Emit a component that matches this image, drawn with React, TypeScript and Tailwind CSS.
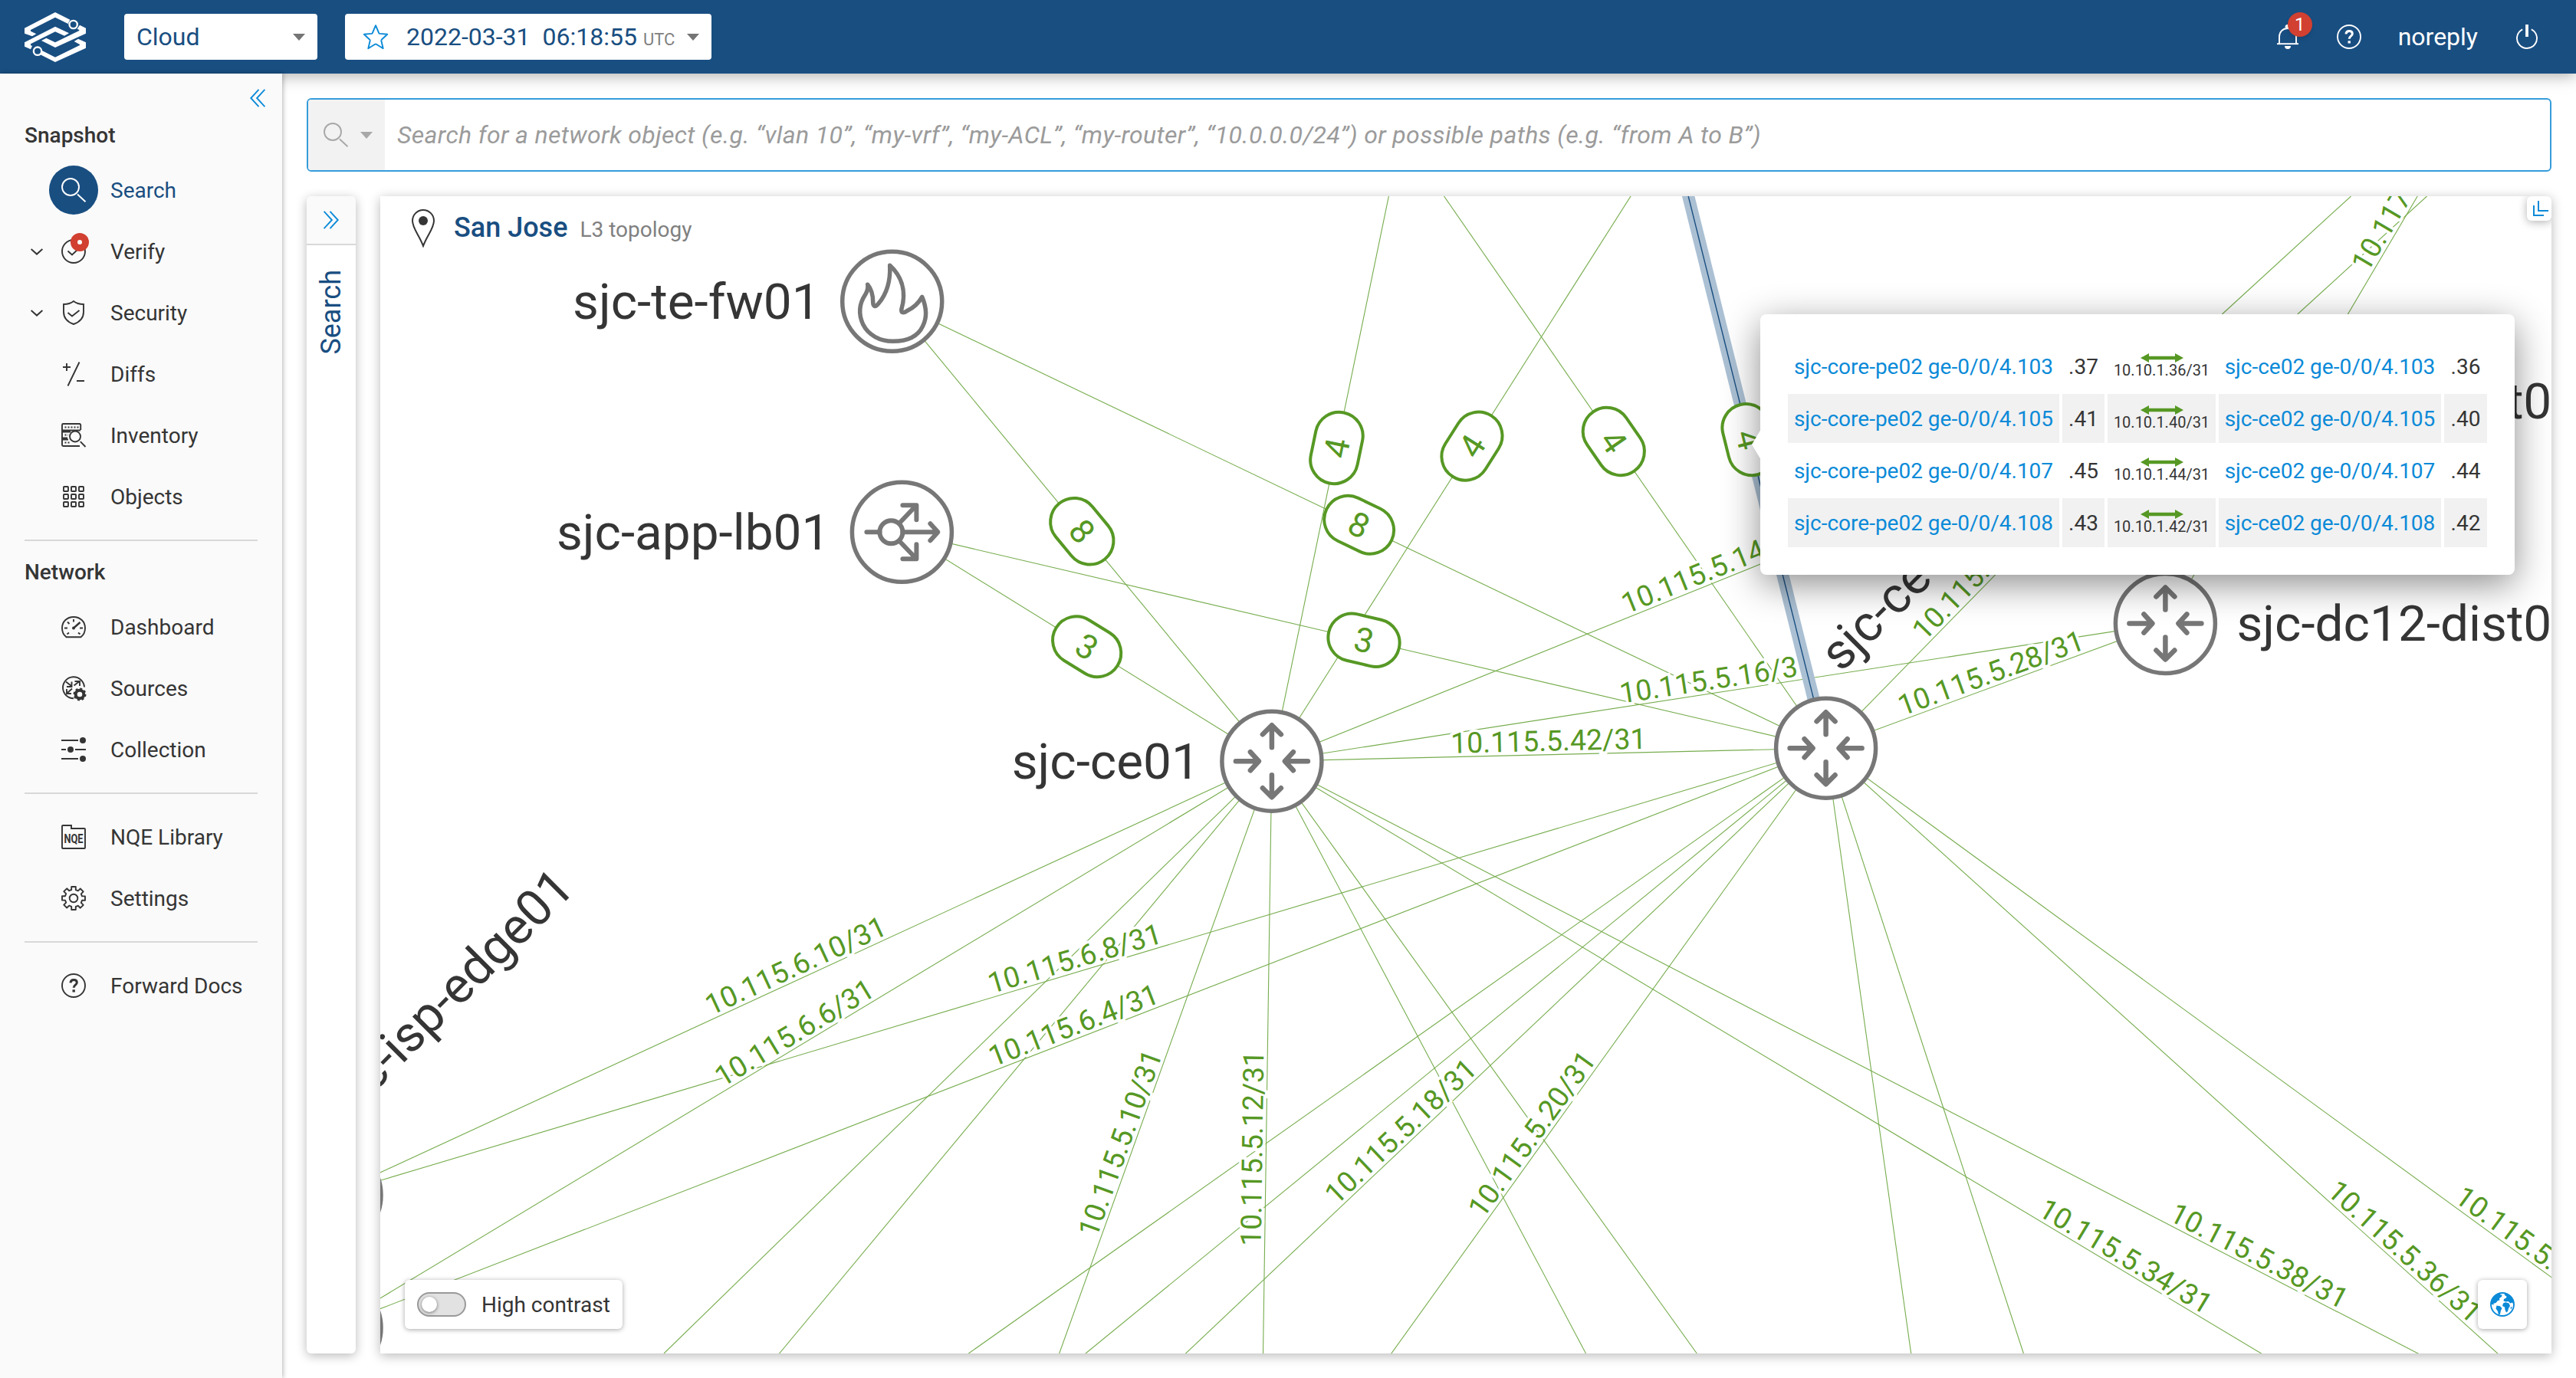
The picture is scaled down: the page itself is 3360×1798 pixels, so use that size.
import type { ReactNode } from "react";

type Point = [number, number];

interface Link {
  from: Point;
  to: Point;
  label?: string;
  count?: number;
}

interface DeviceNode {
  at: Point;
  kind: "router" | "firewall" | "balancer";
  name?: string;
}

const CE01: Point = [1658.9, 993.2];
const CE02: Point = [2381.6, 976.2];
const FW01: Point = [1163.7, 393.3];
const LB01: Point = [1176.4, 694.3];
const DIST11: Point = [2824.4, 523];
const DIST12: Point = [2824.4, 813.5];
const EDGE01: Point = [432, 1559.4];
const EDGE02: Point = [432, 1732.5];
const PE01: Point = [1828, 175.7];
const PE02: Point = [2181, 171];

const LINKS: Link[] = [
  { from: FW01, to: CE01, count: 8 },
  { from: FW01, to: CE02, count: 8 },
  { from: LB01, to: CE01, count: 3 },
  { from: LB01, to: CE02, count: 3 },
  { from: PE01, to: CE01, count: 4 },
  { from: PE02, to: CE01, count: 4 },
  { from: PE01, to: CE02, count: 4 },
  { from: CE01, to: CE02, label: "10.115.5.42/31" },
  { from: CE01, to: DIST11, label: "10.115.5.14/31" },
  { from: CE01, to: DIST12, label: "10.115.5.16/31" },
  { from: CE02, to: DIST11, label: "10.115.5.26/31" },
  { from: CE02, to: DIST12, label: "10.115.5.28/31" },
  { from: CE01, to: EDGE01, label: "10.115.6.10/31" },
  { from: CE01, to: EDGE02, label: "10.115.6.6/31" },
  { from: CE02, to: EDGE01, label: "10.115.6.8/31" },
  { from: CE02, to: EDGE02, label: "10.115.6.4/31" },
  { from: CE01, to: [1297, 2002], label: "10.115.5.10/31" },
  { from: CE01, to: [1644, 2004], label: "10.115.5.12/31" },
  { from: CE02, to: [1297, 2002], label: "10.115.5.18/31" },
  { from: CE02, to: [1644, 2004], label: "10.115.5.20/31" },
  { from: CE01, to: [3868, 2316], label: "10.115.5.34/31" },
  { from: CE01, to: [4218, 2316], label: "10.115.5.38/31" },
  { from: CE02, to: [3868, 2316], label: "10.115.5.36/31" },
  { from: CE02, to: [4218, 2316], label: "10.115.5.40/31" },
  { from: DIST12, to: [3490, -315], label: "10.117.5.10/31" },
  { from: CE01, to: [866, 1766] },
  { from: CE01, to: [1016.5, 1766] },
  { from: CE01, to: [2068.5, 1766] },
  { from: CE01, to: [2213.3, 1766] },
  { from: CE02, to: [2492.7, 1766] },
  { from: CE02, to: [2639.4, 1766] },
  { from: CE02, to: [1416, 1766] },
  { from: CE02, to: [1263.3, 1766] },
  { from: [3066.5, 256], to: [2898.4, 410] },
  { from: [3165.5, 256], to: [2996.8, 410] },
];

const NODES: DeviceNode[] = [
  { at: FW01, kind: "firewall", name: "sjc-te-fw01" },
  { at: LB01, kind: "balancer", name: "sjc-app-lb01" },
  { at: CE01, kind: "router", name: "sjc-ce01" },
  { at: CE02, kind: "router" },
  { at: DIST12, kind: "router" },
  { at: EDGE01, kind: "router" },
  { at: EDGE02, kind: "router" },
];

const SUBNETS = [
  { port: "103", left: ".37", subnet: "10.10.1.36/31", right: ".36" },
  { port: "105", left: ".41", subnet: "10.10.1.40/31", right: ".40" },
  { port: "107", left: ".45", subnet: "10.10.1.44/31", right: ".44" },
  { port: "108", left: ".43", subnet: "10.10.1.42/31", right: ".42" },
];

function midpoint(a: Point, b: Point): Point {
  return [(a[0] + b[0]) / 2, (a[1] + b[1]) / 2];
}

// keeps labels readable: the angle is folded into -90..90
function angle(a: Point, b: Point): number {
  const deg = (Math.atan2(b[1] - a[1], b[0] - a[0]) * 180) / Math.PI;
  if (deg > 90) return deg - 180;
  if (deg <= -90) return deg + 180;
  return deg;
}

function place(link: Link): string {
  const [x, y] = midpoint(link.from, link.to);
  return `translate(${x} ${y}) rotate(${angle(link.from, link.to)})`;
}

function Icon({ children, className = "size-8" }: { children: ReactNode; className?: string }) {
  return (
    <svg
      viewBox="0 0 32 32"
      fill="none"
      stroke="currentColor"
      strokeWidth={1.9}
      className={`${className} overflow-visible shrink-0`}
    >
      {children}
    </svg>
  );
}

const SearchGlyph = (
  <>
    <circle cx="12" cy="12" r="11" />
    <path d="M21 21.5 31.5 31.2" />
  </>
);

const HelpGlyph = (
  <>
    <circle cx="16" cy="16" r="15" />
    <path d="M11.9 12.4c.3-2.6 1.9-3.9 4.3-3.9 2.5 0 4.1 1.4 4.1 3.5 0 3.2-4.1 3.1-4.1 6.8" strokeWidth={3} />
    <path d="M14.5 21.3h3.4v3.2h-3.4z" fill="currentColor" stroke="none" />
  </>
);

function Caret({ className }: { className: string }) {
  return (
    <svg viewBox="0 0 16 9" className={`w-4 h-[9px] shrink-0 ${className}`} fill="currentColor">
      <path d="M0 0h16L8 9z" />
    </svg>
  );
}

function DoubleChevron({ flip = false }: { flip?: boolean }) {
  return (
    <svg
      viewBox="0 0 20 24"
      fill="none"
      stroke="currentColor"
      strokeWidth={1.9}
      className={`w-5 h-6 text-[#0b8ad8] ${flip ? "-scale-x-100" : ""}`}
    >
      <path d="M11.5 .8 1.2 12l10.3 11.2M19.4 .8 9.1 12l10.3 11.2" />
    </svg>
  );
}

function Logo() {
  return (
    <svg viewBox="36 30 240 195" className="w-20 h-[65px]" fill="#fff">
      <path d="M36 92 156 30l58 29-8 16-50-25-96 49v5l22 11-16 9-30-11z" />
      <path d="M252 80l24 12v21l-120 55-54-27 19-10 35 17 94-46v-3l-8-4z" />
      <path d="M36 148 156 86l54 26-18 10-36-16-96 48v5l6 3-6 13-24-11z" />
      <path d="M246 134l30 14v22l-120 55-58-29 8-15 50 25 96-47v-3l-22-12z" />
      <g fill="none" stroke="#fff" strokeWidth={7}>
        <circle cx="227" cy="78" r="15.5" />
        <circle cx="87" cy="182" r="15.5" />
      </g>
    </svg>
  );
}

function Header() {
  return (
    <header className="h-24 shrink-0 flex items-center bg-[#194e81] text-white pl-8 pr-12 shadow-[0_2px_20px_rgba(0,0,0,0.35)]">
      <Logo />
      <button className="ml-[50px] h-[60px] w-[252px] flex items-center justify-between rounded bg-white pl-4 pr-4 text-[32px] text-[#194e81]">
        Cloud
        <Caret className="text-[#757575]" />
      </button>
      <button className="ml-9 h-[60px] w-[478px] flex items-center rounded bg-white pl-6 pr-4 text-[32px] text-[#194e81]">
        <Icon className="size-8 text-[#0b8ad8]">
          <path
            strokeLinejoin="round"
            d="M16 1.2l4.2 9.9c.2.5.5.7 1 .8l10 .9-7.5 7c-.4.4-.5.7-.4 1.200l2.400 10.200-8.800-5.400c-.6-.3-1.200-.3-1.800 0l-8.800 5.400L8.700 21c.1-.5 0-.8-.4-1.200L.8 12.800l10-.9c.5-.1.800-.3 1-.8z"
          />
        </Icon>
        <span className="ml-6">2022-03-31</span>
        <span className="ml-4">06:18:55</span>
        <span className="ml-2 mt-1.5 text-[22px] text-[#808080]">UTC</span>
        <Caret className="ml-auto text-[#757575]" />
      </button>

      <div className="ml-auto flex items-center">
        <div className="relative">
          <Icon>
            <path d="M5 25V16C5 9.500 9.500 5 16 5s11 4.500 11 11v9" />
            <path d="M2 25.200h28" />
            <path d="M16 0a3 3 0 0 1 3 4.500h-6A3 3 0 0 1 16 0zM12 28h8a4 4 0 0 1-8 0z" fill="currentColor" stroke="none" />
          </Icon>
          <span className="absolute left-4 -top-4 size-8 rounded-full bg-[#d14031] text-center text-2xl leading-8 shadow-md">
            1
          </span>
        </div>
        <Icon className="size-8 ml-12">{HelpGlyph}</Icon>
        <span className="ml-12 text-[32px]">noreply</span>
        <Icon className="size-8 ml-12">
          <path d="M10.200 6.300a13 13 0 1 0 11.600 0" />
          <path d="M16 0v16" strokeWidth={3.800} />
        </Icon>
      </div>
    </header>
  );
}

interface NavItemProps {
  label: string;
  icon: ReactNode;
  active?: boolean;
  expandable?: boolean;
  alert?: boolean;
}

function NavItem({ label, icon, active, expandable, alert }: NavItemProps) {
  return (
    <a className={`flex h-20 items-center pl-10 ${active ? "text-[#194e81]" : "text-[#353535]"}`}>
      <span className="w-4">
        {expandable && (
          <svg viewBox="0 0 16 9" className="w-4 h-[9px]" fill="none" stroke="currentColor" strokeWidth={2}>
            <path d="M.6 1 8 7.600 15.400 1" />
          </svg>
        )}
      </span>
      <span
        className={`relative ml-2 size-16 flex items-center justify-center rounded-full ${
          active ? "bg-[#194e81] text-white" : ""
        }`}
      >
        <Icon>{icon}</Icon>
        {alert && (
          <span className="absolute left-7 top-2 size-6 flex items-center justify-center rounded-full bg-[#d14031]">
            <span className="size-1.5 rounded-full bg-white" />
          </span>
        )}
      </span>
      <span className="ml-4 pt-0.5 text-[28px]">{label}</span>
    </a>
  );
}

const GEAR =
  "M13.200 1h5.600v4.200l3 1.200 3-2.900 3.900 3.900-2.900 3 1.200 3H31v5.400h-4l-1.200 3 2.900 3-3.900 3.900-3-2.900-3 1.200V31h-5.600v-4.200l-3-1.200-3 2.900-3.900-3.900 2.900-3-1.200-3H1v-5.400h4l1.200-3-2.900-3 3.900-3.900 3 2.900 3-1.200z";

function Sidebar() {
  return (
    <nav className="relative w-[368px] shrink-0 bg-[#fafafa] pt-4 shadow-[1px_0_6px_rgba(0,0,0,0.3)]">
      <div className="flex h-8 items-center justify-end pr-[22px]">
        <DoubleChevron />
      </div>
      <h2 className="flex h-16 items-center pl-8 pt-0.5 text-[28px] font-medium text-[#353535]">Snapshot</h2>
      <NavItem label="Search" active icon={SearchGlyph} />
      <NavItem
        label="Verify"
        expandable
        alert
        icon={
          <>
            <circle cx="16" cy="16" r="15" />
            <path d="M8.500 15.500l5.500 5 9.500-9" />
          </>
        }
      />
      <NavItem
        label="Security"
        expandable
        icon={
          <>
            <path d="M16 1c3.500 2.800 8 4 13 4v10c0 8-4.500 13-13 16C7.500 28 3 23 3 15V5c5 0 9.500-1.200 13-4z" />
            <path d="M8.500 16l5.500 4.500 9.500-7.500" />
          </>
        }
      />
      <NavItem label="Diffs" icon={<path d="M2 7h10M7 2v10M23.500 .5 8.500 31.500M20 25h10" />} />
      <NavItem
        label="Inventory"
        icon={
          <>
            <path d="M25.200 9V2.500A1.500 1.500 0 0 0 23.700 1H2.500A1.500 1.500 0 0 0 1 2.500V28.500A1.500 1.500 0 0 0 2.500 30H24M1 9.500h24M1 11.500h11M1 19.500h7M1 21.500h8" />
            <path d="M4.500 5.500h18" strokeWidth={2.200} strokeDasharray="2 2" />
            <path d="M4.500 15.500h4.500M4.500 25.500h8" strokeWidth={2.200} strokeDasharray="2 2" />
            <circle cx="18" cy="17.500" r="7" />
            <path d="M24.800 24.200 31.500 31" />
          </>
        }
      />
      <NavItem
        label="Objects"
        icon={[2, 12, 22].map((x) =>
          [2, 12, 22].map((y) => <rect key={`${x}-${y}`} x={x + 1} y={y + 1} width="6" height="6" rx="0.8" />)
        )}
      />

      <hr className="mx-8 mt-4 border-t-2 border-[#d8d8d8]" />
      <h2 className="flex h-[72px] items-center pl-8 pt-2.5 text-[28px] font-medium text-[#353535]">Network</h2>
      <NavItem
        label="Dashboard"
        icon={
          <>
            <path d="M6.500 29.300C3 26.500 1 22 1 17.500 1 9 7.500 3 16 3s15 6 15 14.500c0 4.500-2 9-5.500 11.800z" />
            <path d="M16 6v3.500M4 17.500h4M24 17.500h4M8 9.500l2.500 2.500M7.500 25.500l2.500-2M24.500 25.500l-2.500-2" />
            <path d="M16 17.500 24.500 10" strokeWidth={2.400} />
            <circle cx="16" cy="17.500" r="2" fill="currentColor" stroke="none" />
          </>
        }
      />
      <NavItem
        label="Sources"
        icon={
          <>
            <path d="M16 29.300A14 14 0 1 1 30 14.500" />
            <path d="M6 7.500l7 5.500M13.500 7.500V14H7M16.500 12.500l7-5.500M17.500 7H24v6M14 16.500l-6.500 6M7 17v6h6" />
            <circle cx="24" cy="24" r="5.300" strokeWidth={4} />
            <circle cx="24" cy="24" r="7.200" strokeWidth={2.600} strokeDasharray="2.900 2.750" />
          </>
        }
      />
      <NavItem
        label="Collection"
        icon={
          <>
            <path d="M0 4h22M0 16h6M18 16h14M0 28h22" />
            <g fill="currentColor" stroke="none">
              <circle cx="28" cy="4" r="4" />
              <circle cx="12" cy="16" r="4" />
              <circle cx="28" cy="28" r="4" />
            </g>
          </>
        }
      />

      <hr className="mx-8 my-4 border-t-2 border-[#d8d8d8]" />
      <NavItem
        label="NQE Library"
        icon={
          <>
            <path d="M1 2a1 1 0 0 1 1-1h11v4h17a1 1 0 0 1 1 1v24a1 1 0 0 1-1 1H2a1 1 0 0 1-1-1z" />
            <text
              x="16"
              y="24"
              textAnchor="middle"
              textLength="25"
              lengthAdjust="spacingAndGlyphs"
              fill="currentColor"
              stroke="none"
              className="text-[17px] font-bold"
            >
              NQE
            </text>
          </>
        }
      />
      <NavItem
        label="Settings"
        icon={
          <>
            <path d={GEAR} strokeLinejoin="round" />
            <circle cx="16" cy="16" r="5.300" />
          </>
        }
      />
      <hr className="mx-8 my-4 border-t-2 border-[#d8d8d8]" />
      <NavItem label="Forward Docs" icon={HelpGlyph} />
    </nav>
  );
}

function NodeGlyph({ kind }: { kind: DeviceNode["kind"] }) {
  if (kind === "firewall") {
    return (
      <path
        d="M-3-47C10-35 20-16 12 11c0 5 4 4 8 1 8-4 14-9 19-18 6 14 7 26 1 38-7 15-22 20-39 20s-32-8-39-22c-6-13-5-27 3-39 3-5 4-8 3-13 5 6 7 13 7 23 0 6 3 7 7 2C-7-10-2-26-3-47z"
        strokeWidth={5.500}
        strokeLinejoin="round"
      />
    );
  }
  if (kind === "balancer") {
    return (
      <g strokeWidth={6} strokeLinecap="round" strokeLinejoin="round">
        <circle cx="-14" cy="0" r="15" />
        <path d="M-46 0h17M1 0h45M37-11 47 0 37 11M-3-12l21-22M1-35h18v19M-3 12l21 22M1 35h18v-19" />
      </g>
    );
  }
  return (
    <g strokeWidth={6.500} strokeLinecap="round" strokeLinejoin="round">
      <path d="M0-18v-28M-12-35 0-47l12 12" />
      <path d="M0 18v28M-12 35 0 47l12-12" />
      <path d="M-47 0h29M-28-12-17 0l-11 12" />
      <path d="M47 0h-29M28-12 17 0l11 12" />
    </g>
  );
}

function Topology() {
  return (
    // viewBox is in page pixels, so node positions are window coordinates
    <svg viewBox="496 256 2832 1510" className="block w-full h-full">
      <g stroke="#569922" strokeWidth={1.100} opacity={0.8}>
        {LINKS.map(({ from, to }, i) => (
          <line key={i} x1={from[0]} y1={from[1]} x2={to[0]} y2={to[1]} />
        ))}
      </g>

      <g fill="#569824" stroke="#fff" strokeWidth={7} paintOrder="stroke" textAnchor="middle" className="text-[37.4px]">
        {LINKS.filter((l) => l.label).map((l) => (
          <text key={l.label} transform={place(l)} y={-5}>
            {l.label}
          </text>
        ))}
      </g>

      <line x1={PE02[0]} y1={PE02[1]} x2={CE02[0]} y2={CE02[1]} stroke="#abc0d3" strokeWidth={16} />
      <line x1={PE02[0]} y1={PE02[1]} x2={CE02[0]} y2={CE02[1]} stroke="#194e81" strokeWidth={1.400} />

      {[...LINKS.filter((l) => l.count), { from: PE02, to: CE02, count: 4 }].map((l, i) => (
        <g key={i} transform={place(l)}>
          <rect x={-47} y={-31} width={94} height={62} rx={31} fill="#fff" stroke="#569824" strokeWidth={4} />
          <text y={15.500} textAnchor="middle" fill="#569824" className="text-[44px]">
            {l.count}
          </text>
        </g>
      ))}

      {NODES.map(({ at, kind, name }) => (
        <g key={at.join()} transform={`translate(${at[0]} ${at[1]})`}>
          <circle r={65} fill="#fff" stroke="#777" strokeWidth={5.500} />
          <g fill="none" stroke="#777">
            <NodeGlyph kind={kind} />
          </g>
          {name && (
            <text x={-94} y={22.700} textAnchor="end" fill="#353535" className="text-[65.7px]">
              {name}
            </text>
          )}
        </g>
      ))}

      <g fill="#353535" stroke="#fff" strokeWidth={6} paintOrder="stroke" className="text-[65.7px]">
        <text transform={`translate(${CE02[0]} ${CE02[1]}) rotate(-45)`} x={83} y={-55}>
          sjc-ce02
        </text>
        <text transform={`translate(${EDGE01[0]} ${EDGE01[1]}) rotate(-45)`} x={83} y={-55}>
          sjc-isp-edge01
        </text>
        <text x={DIST12[0] + 93} y={DIST12[1] + 22.500}>
          sjc-dc12-dist0
        </text>
        <text x={DIST11[0] + 93} y={DIST11[1] + 22.500}>
          sjc-dc11-dist0
        </text>
      </g>
    </svg>
  );
}

function LinkPopover() {
  return (
    <div className="absolute left-[1800px] top-[154px] w-[984px] h-[340px] rounded-lg bg-white p-8 shadow-[0_12px_48px_rgba(0,0,0,0.45)]">
      <svg viewBox="0 0 12 40" className="absolute -left-[11px] top-[150px] w-3 h-10" fill="#fff">
        <path d="M12 0v40L0 20z" />
      </svg>
      <table className="w-full table-fixed border-separate border-spacing-1 text-[28px] leading-8 text-[#353535]">
        <colgroup>
          <col className="w-[354px]" />
          <col className="w-[55px]" />
          <col className="w-[141px]" />
          <col className="w-[290px]" />
          <col className="w-[56px]" />
        </colgroup>
        <tbody>
          {SUBNETS.map((row) => (
            <tr key={row.port} className="h-16 even:*:bg-[#f1f1f1] *:p-0 *:pt-0.5 *:text-center *:whitespace-nowrap">
              <td className="text-[#0b8ad8]">sjc-core-pe02 ge-0/0/4.{row.port}</td>
              <td>{row.left}</td>
              <td className="text-xl leading-none">
                <svg viewBox="0 0 56 12" className="mx-auto w-14 h-3 -mt-1" fill="#569824">
                  <path d="M0 6 11 0v3.700h34V0l11 6-11 6V8.300H11V12z" />
                </svg>
                {row.subnet}
              </td>
              <td className="text-[#0b8ad8]">sjc-ce02 ge-0/0/4.{row.port}</td>
              <td>{row.right}</td>
            </tr>
          ))}
        </tbody>
      </table>
    </div>
  );
}

function GlobeIcon() {
  return (
    <svg viewBox="0 0 32 32" className="size-8" fill="#0b8ad8">
      <circle cx="16" cy="16" r="15" fill="none" stroke="#0b8ad8" strokeWidth={1.900} />
      <path d="M2 12C3 7 8 2 14 1.200l-1 2 2.500.3-.5 2.500-3 2 .5 2.500-2.500.5-2.500 3-2 .5-1.500 1L5 17l-3.500-1.500z" />
      <path d="M18.500 1.200C24 2 28.500 5.500 30.500 11l.5 6-2-3.500-2.500 1-3-2.500-3 .5-3-1 .5-2.500 3-1.500.5-2-2.500-1.500z" />
      <path d="M8.500 17.500l4.500.8 2.500 2.700-1.500 3-1 4.500-2 1.500-1-5-2.500-3.500z" />
      <path d="M17 14.500l3-1.300 4.500 1.300 1.500 3.500-2 3-1 4-2 1.500-1.500-3.500-.5-3.500-3-1.500z" />
      <path d="M27 19l1.500.5-.8 2.500-1.200-.6z" />
    </svg>
  );
}

function TopologyPanel() {
  return (
    <section className="relative flex-1 overflow-hidden bg-white">
      <Topology />

      <div className="absolute left-[41px] top-4 flex items-baseline">
        <svg
          viewBox="0 0 30 50"
          className="mt-px w-[30px] h-[50px] self-start text-[#353535]"
          fill="none"
          stroke="currentColor"
          strokeWidth={2}
        >
          <path d="M15 48C10 34 1 25 1 15a14 14 0 0 1 28 0c0 10-9 19-14 33z" />
          <circle cx="15" cy="15" r="6" fill="currentColor" stroke="none" />
        </svg>
        <h1 className="ml-[25px] text-[36px] leading-[50px] font-medium text-[#194e81]">San Jose</h1>
        <span className="ml-4 text-[28px] text-[#808080]">L3 topology</span>
      </div>

      <button className="absolute right-0 top-0 size-8 rounded-md bg-white shadow-[0_2px_12px_rgba(0,0,0,0.3)]">
        <svg viewBox="0 0 32 32" className="size-8" fill="none" stroke="#0b8ad8" strokeWidth={2}>
          <path d="M15 6v13h13M9 12v13h13" />
        </svg>
      </button>

      <div className="absolute bottom-8 left-8 flex h-16 w-[284px] items-center rounded-md bg-white px-4 shadow-[0_1px_6px_rgba(0,0,0,0.35)]">
        <span className="flex h-8 w-16 items-center rounded-full border-2 border-[#999] bg-[#e2e2e2] pl-1">
          <span className="size-5 rounded-full bg-white shadow-[0_1px_4px_rgba(0,0,0,0.5)]" />
        </span>
        <span className="ml-5 pt-0.5 text-[28px] text-[#353535]">High contrast</span>
      </div>

      <button className="absolute bottom-8 right-8 size-16 flex items-center justify-center rounded-md bg-white shadow-[0_1px_6px_rgba(0,0,0,0.35)]">
        <GlobeIcon />
      </button>

      <LinkPopover />
    </section>
  );
}

export default function App() {
  return (
    <div className="flex h-[1798px] w-[3360px] flex-col overflow-hidden bg-white font-[Roboto,sans-serif]">
      <Header />
      <div className="flex flex-1 min-h-0">
        <Sidebar />
        <main className="flex flex-1 flex-col p-8">
          <div className="flex h-24 shrink-0 overflow-hidden rounded-md border-2 border-[#369cda] bg-white">
            <div className="flex w-[100px] items-center bg-[#f2f2f2] pl-5 text-[#a8a8a8]">
              <Icon>{SearchGlyph}</Icon>
              <Caret className="ml-4" />
            </div>
            <div className="flex items-center pl-4 text-[32px] italic tracking-[0.36px] text-[#9b9b9b]">
              Search for a network object (e.g. “vlan 10”, “my-vrf”, “my-ACL”, “my-router”, “10.0.0.0/24”) or possible
              paths (e.g. “from A to B”)
            </div>
          </div>

          <div className="mt-8 flex flex-1 min-h-0 gap-8">
            <aside className="flex w-16 flex-col items-center rounded-md bg-white shadow-[0_3px_14px_rgba(0,0,0,0.28)]">
              <button className="flex h-16 w-full items-center justify-center rounded-t-md border-b-2 border-[#d8d8d8] bg-[#fafafa]">
                <DoubleChevron flip />
              </button>
              <span className="mt-8 rotate-180 text-[36px] leading-[48px] text-[#194e81] [writing-mode:vertical-rl]">
                Search
              </span>
            </aside>
            <div className="flex flex-1 shadow-[0_3px_14px_rgba(0,0,0,0.28)]">
              <TopologyPanel />
            </div>
          </div>
        </main>
      </div>
    </div>
  );
}
